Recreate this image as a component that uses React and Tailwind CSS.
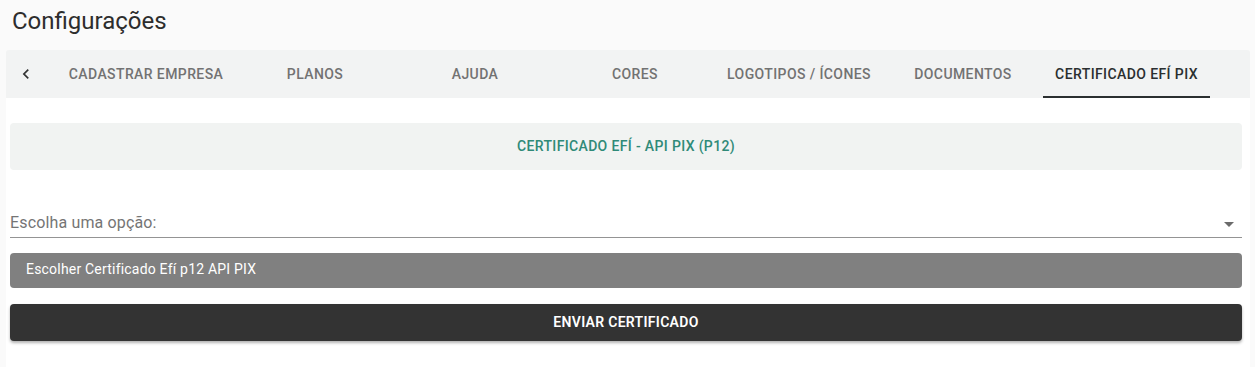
import React from "react";

const tabs = [
  { label: "CADASTRAR EMPRESA", w: "w-[178px]" },
  { label: "PLANOS", w: "w-[160px]" },
  { label: "AJUDA", w: "w-[160px]" },
  { label: "CORES", w: "w-[160px]" },
  { label: "LOGOTIPOS / ÍCONES", w: "w-[168px]" },
  { label: "DOCUMENTOS", w: "w-[160px]" },
  { label: "CERTIFICADO EFÍ PIX", w: "w-[167px]", active: true },
];

export default function App() {
  return (
    <div className="w-[1255px] h-[367px] bg-[#fafafa] overflow-hidden font-['Roboto',sans-serif]">
      <div className="h-[50px] flex items-center pl-[12px] pb-[8px]">
        <h1 className="text-[24px] leading-none text-[#2d2d2d] font-normal">Configurações</h1>
      </div>
      <div className="ml-[6px] w-[1244px]">
        <div className="h-[48px] bg-[#f2f3f3] flex items-stretch rounded-t-[3px]">
          <div className="w-[40px] flex items-center justify-center">
            <svg width="20" height="20" viewBox="0 0 24 24" fill="#333">
              <path d="M15.41 16.59 10.83 12l4.58-4.59L14 6l-6 6 6 6z" />
            </svg>
          </div>
          <div className="flex pl-[11px]">
            {tabs.map((t) => (
              <div
                key={t.label}
                className={`${t.w} relative flex items-center justify-center px-[12px] text-[14px] font-medium tracking-[0.4px] whitespace-nowrap ${
                  t.active ? "text-[#2b2f30]" : "text-[#727272]"
                }`}
              >
                {t.label}
                {t.active && <div className="absolute left-0 right-0 bottom-0 h-[2px] bg-[#2b2f30]" />}
              </div>
            ))}
          </div>
        </div>
        <div className="bg-white h-[269px] pl-[4px] pr-[8px] pt-[25px]">
          <div className="h-[47px] bg-[#f1f3f2] rounded-[4px] flex items-center justify-center text-[14px] font-medium text-[#2f8a78] tracking-[0.35px]">
            CERTIFICADO EFÍ - API PIX (P12)
          </div>
          <div className="mt-[38px] h-[30px] border-b border-[#949494] flex items-center justify-between">
            <span className="text-[16px] text-[#757575] tracking-[0.15px] pt-[1px]">Escolha uma opção:</span>
            <svg width="24" height="24" viewBox="0 0 24 24" fill="#6b6b6b" className="mr-[1px] mt-[2px]">
              <path d="M7 10l5 5 5-5z" />
            </svg>
          </div>
          <div className="mt-[15px] h-[35px] bg-[#808080] rounded-[4px] flex items-center pl-[16px] pb-[2px] text-[14px] text-white tracking-[0.2px]">
            Escolher Certificado Efí p12 API PIX
          </div>
          <div className="mt-[16px] h-[37px] bg-[#333333] rounded-[4px] flex items-center justify-center text-[14px] font-semibold text-white tracking-[0.3px] shadow-[0_2px_3px_rgba(0,0,0,0.3)]">
            ENVIAR CERTIFICADO
          </div>
        </div>
      </div>
    </div>
  );
}
